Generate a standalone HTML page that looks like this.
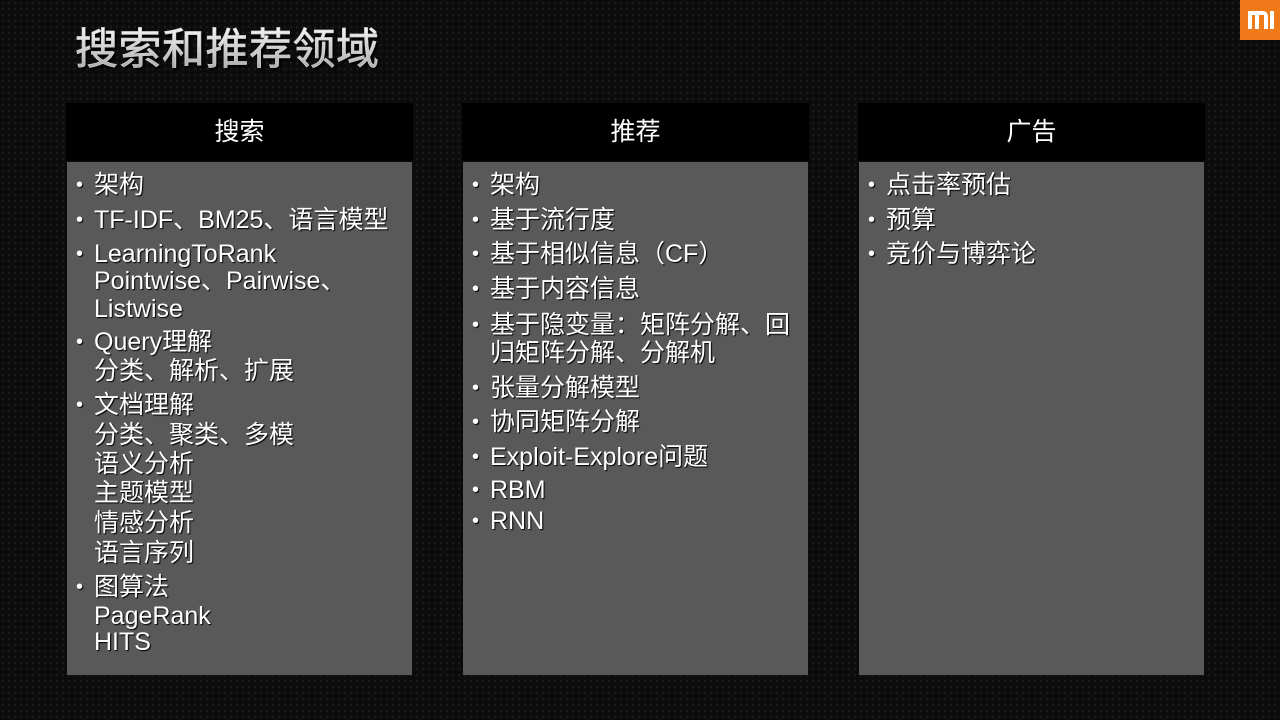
<!DOCTYPE html>
<html><head><meta charset="utf-8"><style>
body{margin:0;width:1280px;height:720px;overflow:hidden;background:#0c0c0c;
background-image:radial-gradient(circle at 3px 3px,#1a1a1a 1.1px,transparent 1.5px);background-size:6px 6px;
font-family:"Liberation Sans","Noto Sans CJK SC",sans-serif;position:relative}
.title{position:absolute;left:75px;top:22px;font-size:43px;line-height:56px;color:#ddd;letter-spacing:0.5px;
background:linear-gradient(#ffffff,#c4c4c4 60%,#9a9a9a);-webkit-background-clip:text;background-clip:text;-webkit-text-fill-color:transparent;
-webkit-text-stroke:0.6px #ccc;filter:drop-shadow(2px 2px 1px #000)}
.logo{position:absolute;left:1240px;top:0;width:40px;height:40px;background:#f07a1a}
.hd{position:absolute;top:103px;width:347px;height:58px;background:#000;color:#fff;font-size:25px;text-align:center;line-height:58px}
.bd{position:absolute;top:162px;width:345px;height:513px;background:#595959}
.it{position:absolute;color:#fff;font-size:25px;line-height:27px;text-shadow:1px 1px 1px #000;white-space:nowrap}
.b{position:absolute;color:#fff;font-size:20px;line-height:27px;text-shadow:1px 1px 1px #000}
</style></head><body>
<div class="title">搜索和推荐领域</div>
<div class="logo"><svg width="40" height="40" viewBox="0 0 40 40"><path d="M8 11h15a5 5 0 0 1 5 5v13h-4V15h-5v14h-4V15h-3v14H8z M30 11h4v18h-4z" fill="#fff"/></svg></div>

<div class="hd" style="left:66px">搜索</div>
<div class="hd" style="left:462px">推荐</div>
<div class="hd" style="left:858px">广告</div>
<div class="bd" style="left:67px"></div>
<div class="bd" style="left:463px"></div>
<div class="bd" style="left:859px"></div>

<div style="position:absolute;left:76px;top:0">
<span class="b" style="top:172px">•</span><span class="it" style="left:18px;top:172px">架构</span>
<span class="b" style="top:207px">•</span><span class="it" style="left:18px;top:207px">TF-IDF、BM25、语言模型</span>
<span class="b" style="top:241px">•</span><span class="it" style="left:18px;top:241px">LearningToRank</span>
<span class="it" style="left:18px;top:268px">Pointwise、Pairwise、</span>
<span class="it" style="left:18px;top:296px">Listwise</span>
<span class="b" style="top:329px">•</span><span class="it" style="left:18px;top:329px">Query理解</span>
<span class="it" style="left:18px;top:358px">分类、解析、扩展</span>
<span class="b" style="top:392px">•</span><span class="it" style="left:18px;top:392px">文档理解</span>
<span class="it" style="left:18px;top:422px">分类、聚类、多模</span>
<span class="it" style="left:18px;top:451px">语义分析</span>
<span class="it" style="left:18px;top:480px">主题模型</span>
<span class="it" style="left:18px;top:510px">情感分析</span>
<span class="it" style="left:18px;top:540px">语言序列</span>
<span class="b" style="top:574px">•</span><span class="it" style="left:18px;top:574px">图算法</span>
<span class="it" style="left:18px;top:603px">PageRank</span>
<span class="it" style="left:18px;top:629px">HITS</span>
</div>

<div style="position:absolute;left:472px;top:0">
<span class="b" style="top:172px">•</span><span class="it" style="left:18px;top:172px">架构</span>
<span class="b" style="top:207px">•</span><span class="it" style="left:18px;top:207px">基于流行度</span>
<span class="b" style="top:241px">•</span><span class="it" style="left:18px;top:241px">基于相似信息（CF）</span>
<span class="b" style="top:276px">•</span><span class="it" style="left:18px;top:276px">基于内容信息</span>
<span class="b" style="top:312px">•</span><span class="it" style="left:18px;top:312px">基于隐变量：矩阵分解、回</span>
<span class="it" style="left:18px;top:340px">归矩阵分解、分解机</span>
<span class="b" style="top:375px">•</span><span class="it" style="left:18px;top:375px">张量分解模型</span>
<span class="b" style="top:409px">•</span><span class="it" style="left:18px;top:409px">协同矩阵分解</span>
<span class="b" style="top:444px">•</span><span class="it" style="left:18px;top:444px">Exploit-Explore问题</span>
<span class="b" style="top:477px">•</span><span class="it" style="left:18px;top:477px">RBM</span>
<span class="b" style="top:508px">•</span><span class="it" style="left:18px;top:508px">RNN</span>
</div>

<div style="position:absolute;left:868px;top:0">
<span class="b" style="top:172px">•</span><span class="it" style="left:18px;top:172px">点击率预估</span>
<span class="b" style="top:207px">•</span><span class="it" style="left:18px;top:207px">预算</span>
<span class="b" style="top:241px">•</span><span class="it" style="left:18px;top:241px">竞价与博弈论</span>
</div>
</body></html>
